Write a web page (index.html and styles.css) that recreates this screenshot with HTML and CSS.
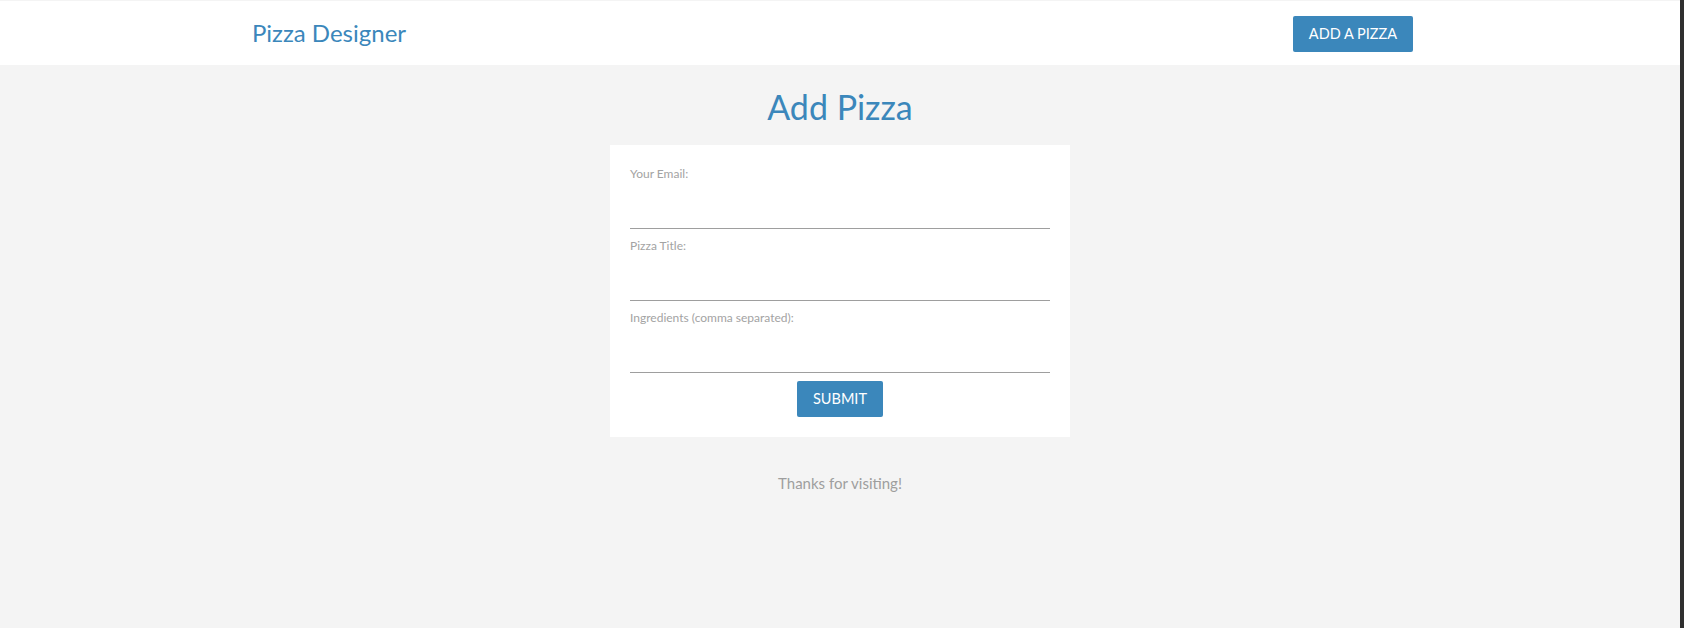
FILE: index.html
```html
<!DOCTYPE html>
<html lang="en">
<head>
<meta charset="utf-8">
<title>Pizza Designer</title>
<link rel="stylesheet" href="styles.css">
</head>
<body>
  <div class="page">
    <nav class="nav">
      <div class="container nav-inner">
        <a class="brand" href="#">Pizza Designer</a>
        <ul class="nav-links">
          <li><a class="btn" href="#">Add a Pizza</a></li>
        </ul>
      </div>
    </nav>
    <main class="main">
      <h4 class="title">Add Pizza</h4>
      <form class="card">
        <label class="field-label">Your Email:</label>
        <input class="field-input" type="text">
        <label class="field-label">Pizza Title:</label>
        <input class="field-input" type="text">
        <label class="field-label">Ingredients (comma separated):</label>
        <input class="field-input" type="text">
        <div class="actions">
          <button class="btn" type="button">Submit</button>
        </div>
      </form>
    </main>
    <footer class="footer">Thanks for visiting!</footer>
  </div>
  <div class="scrollbar"></div>
</body>
</html>
```

FILE: styles.css
```css
* { box-sizing: border-box; }

html, body {
  margin: 0;
  padding: 0;
}

body {
  display: flex;
  min-height: 100vh;
  background: #f4f4f4;
  font-family: "Lato", "Open Sans", sans-serif;
  color: #9e9e9e;
}

.page {
  flex: 1;
  padding-top: 1px;
  background: #f4f4f4;
}

.scrollbar {
  width: 4px;
  flex: 0 0 4px;
  background: #2f2f2f;
}

.nav {
  background: #ffffff;
  height: 64px;
}

.container {
  width: 70%;
  margin: 0 auto;
}

.nav-inner {
  display: flex;
  justify-content: space-between;
  align-items: flex-start;
  height: 64px;
}

.brand {
  font-size: 24px;
  line-height: 64px;
  color: #3b87bb;
  text-decoration: none;
}

.nav-links {
  list-style: none;
  margin: 0;
  padding: 0 15px;
  display: flex;
}

.nav-links li {
  margin-top: 15px;
}

.btn {
  display: inline-block;
  height: 36px;
  line-height: 36px;
  padding: 0 16px;
  border: none;
  border-radius: 2px;
  background: #3b87bb;
  color: #ffffff;
  font-family: inherit;
  font-size: 14.5px;
  text-transform: uppercase;
  text-decoration: none;
  cursor: pointer;
}

.main {
  display: flex;
  flex-direction: column;
  align-items: center;
}

.title {
  margin: 23px 0 19px;
  font-size: 34px;
  line-height: 38px;
  font-weight: 400;
  color: #3b87bb;
  text-align: center;
}

.card {
  width: 460px;
  padding: 20px;
  background: #ffffff;
  display: flex;
  flex-direction: column;
}

.field-label {
  font-size: 12px;
  line-height: 18px;
  color: #a3a3a3;
}

.field-input {
  display: block;
  width: 100%;
  height: 46px;
  margin: 0 0 8px;
  padding: 0;
  border: none;
  border-bottom: 1px solid #9e9e9e;
  background: transparent;
  outline: none;
  font-family: inherit;
  font-size: 15px;
}

.actions {
  display: flex;
  justify-content: center;
}

.footer {
  margin-top: 35px;
  font-size: 15px;
  line-height: 22px;
  text-align: center;
  color: #9e9e9e;
}
```
